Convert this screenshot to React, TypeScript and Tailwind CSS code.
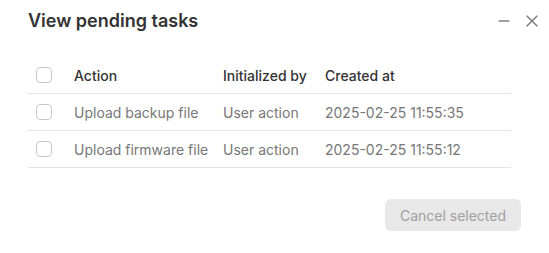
import React from "react";

const rows = [
  { action: "Upload backup file", by: "User action", at: "2025-02-25 11:55:35" },
  { action: "Upload firmware file", by: "User action", at: "2025-02-25 11:55:12" },
];

const Box = () => (
  <span className="block w-4 h-4 rounded-[4px] border border-[#c8c8c8] bg-white" />
);

export default function App() {
  return (
    <div
      className="w-[549px] h-[253px] bg-white text-[#333] overflow-hidden"
      style={{ fontFamily: "Inter, 'Noto Sans', sans-serif" }}
    >
      <div className="flex items-center justify-between pl-[28px] pr-[11px] pt-[11px] h-[31px]">
        <h1 className="text-[18px] font-semibold text-[#333] leading-none">View pending tasks</h1>
        <div className="flex items-center gap-[16px] text-[#777]">
          <svg width="12" height="12" viewBox="0 0 12 12" fill="none">
            <path d="M0.5 6h11" stroke="currentColor" strokeWidth="1.4" />
          </svg>
          <svg width="12" height="12" viewBox="0 0 12 12" fill="none">
            <path d="M0.7 0.7l10.6 10.6M11.3 0.7l-10.6 10.6" stroke="currentColor" strokeWidth="1.4" />
          </svg>
        </div>
      </div>

      <div className="mx-[28px] mt-[26px] w-[483px] text-[14px]">
        <div className="flex items-center h-[37px] border-b border-[#e4e4e4] font-medium text-[#333]">
          <div className="w-[38px] pl-[8px]"><Box /></div>
          <div className="w-[149px] pl-[8px]">Action</div>
          <div className="w-[102px] pl-[8px]">Initialized by</div>
          <div className="flex-1 pl-[8px]">Created at</div>
        </div>
        {rows.map((r) => (
          <div key={r.at} className="flex items-center h-[37px] border-b border-[#e4e4e4] text-[#777]">
            <div className="w-[38px] pl-[8px]"><Box /></div>
            <div className="w-[149px] pl-[8px] whitespace-nowrap">{r.action}</div>
            <div className="w-[102px] pl-[8px] whitespace-nowrap">{r.by}</div>
            <div className="flex-1 pl-[8px] whitespace-nowrap">{r.at}</div>
          </div>
        ))}
      </div>

      <div className="flex justify-end pr-[28px] mt-[31px]">
        <button
          disabled
          className="h-[32px] w-[136px] rounded-[6px] bg-[#e8e8e8] text-[#a0a0a0] text-[14px]"
        >
          Cancel selected
        </button>
      </div>
    </div>
  );
}
